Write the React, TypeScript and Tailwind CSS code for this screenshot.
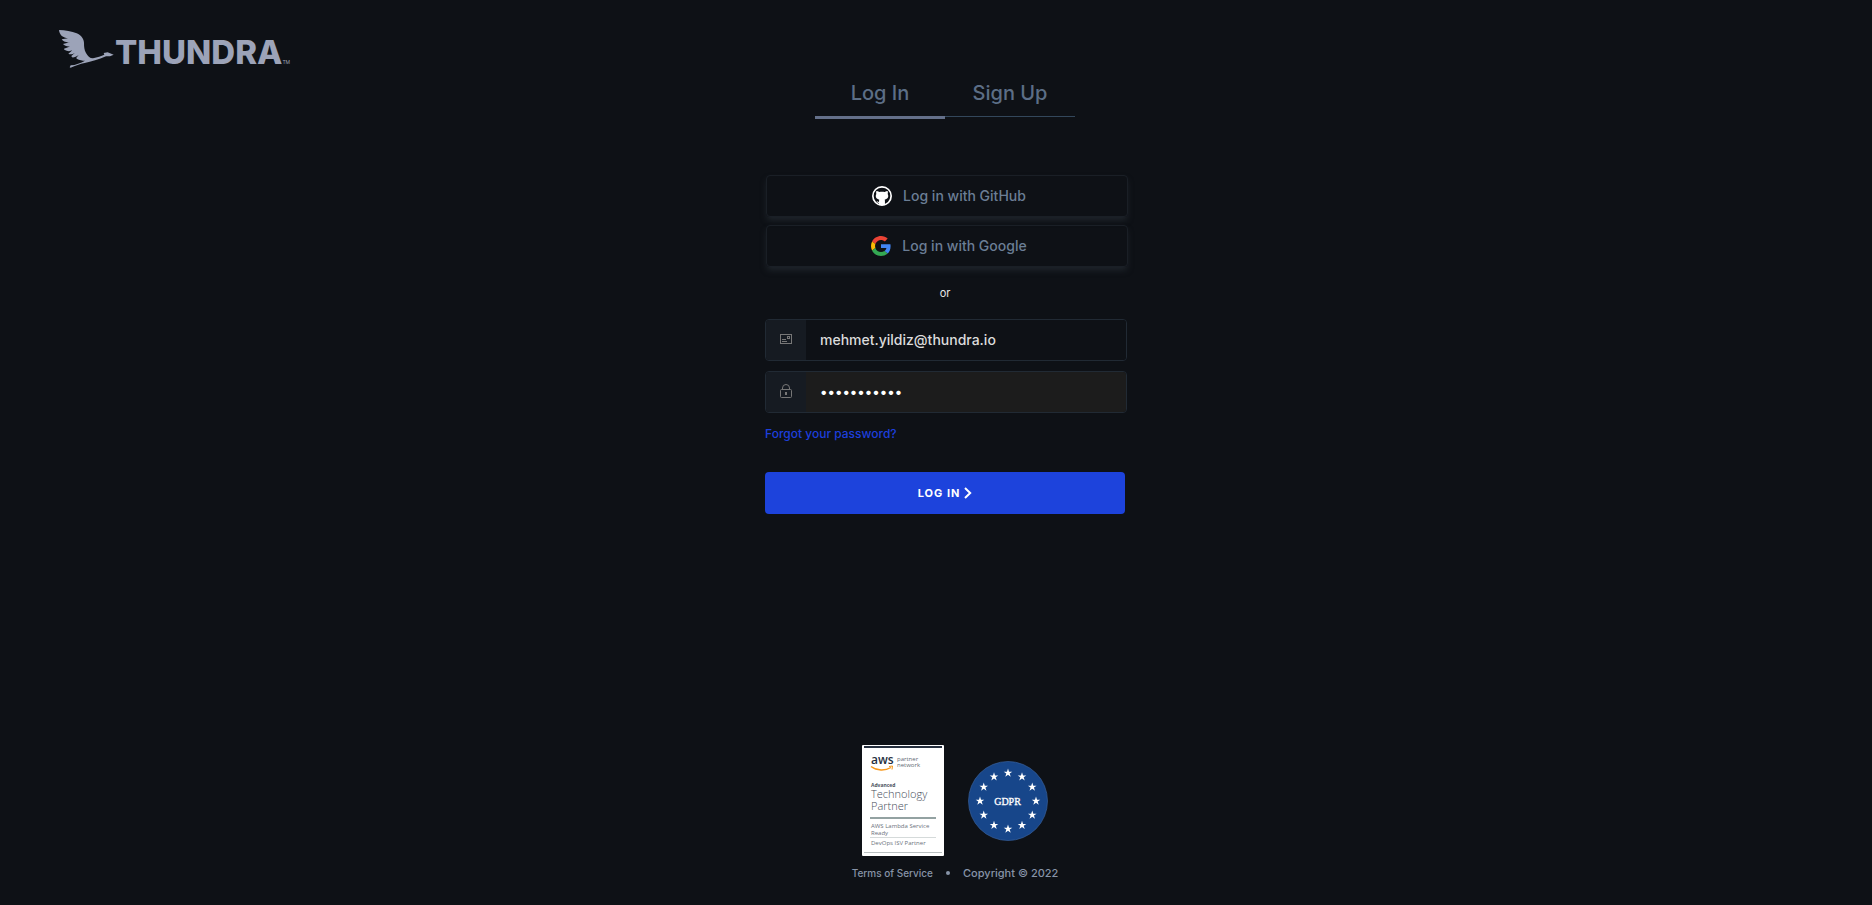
import { useState } from "react";

function Logo() {
  return (
    <a href="#home" aria-label="Thundra" className="flex items-start text-[#9ca3b8]">
      <svg viewBox="27 30 165 114" className="h-[38px] w-[55px]" fill="currentColor" aria-hidden="true">
        <path d="M27 30C45 30 66 34 80 40C94 46 101 56 102 68C102 80 103 90 108 99C113 108 119 115 129 115C142 112 154 108 163 104L161 99L173 97L191 104L180 109L168 109C146 119 124 125 104 129C90 132 76 137 62 143L59 142L62 136C77 135 92 129 105 122C97 122 89 120 80 116L79 113L86 105C79 110 72 113 66 112L64 108L75 98C67 103 61 104 55 101L67 91C59 95 51 94 43 89L42 86L62 79C53 81 44 78 39 72L59 67C48 68 39 65 35 58L54 55C40 54 28 45 27 30Z" />
      </svg>
      <span className="ml-px mt-[7px] text-[33px] leading-[30px] font-extrabold">THUNDRA</span>
      <span className="mt-7 text-[5px] leading-[8px]">TM</span>
    </a>
  );
}

function GitHubIcon() {
  return (
    <svg viewBox="0 0 60 60" className="size-5" aria-hidden="true">
      <circle cx="30" cy="30" r="27.5" fill="none" stroke="#fff" strokeWidth="5" />
      <path fill="#fff" d="M13 15C16 15 19 16 22 18C27 17 33 17 38 18C41 16 44 15 47 15C48 19 48 22 47 24C51 31 48 39 38 41C39 43 39 45 39 58H21V51C16 51 15 47 13 45C17 45 17 48 21 48C21 45 21 43 22 41C12 39 9 31 13 24C12 22 12 19 13 15Z" />
    </svg>
  );
}

function GoogleIcon() {
  return (
    <svg viewBox="0 0 48 48" className="size-5" aria-hidden="true">
      <path fill="#EA4335" d="M24 9.500c3.540 0 6.710 1.220 9.210 3.600l6.850-6.850C35.900 2.380 30.470 0 24 0 14.620 0 6.510 5.380 2.560 13.220l7.980 6.190C12.430 13.720 17.740 9.500 24 9.500z" />
      <path fill="#4285F4" d="M46.980 24.550c0-1.570-.15-3.090-.38-4.550H24v9.020h12.940c-.58 2.960-2.260 5.480-4.780 7.180l7.730 6c4.510-4.180 7.090-10.360 7.090-17.650z" />
      <path fill="#FBBC05" d="M10.530 28.590c-.48-1.450-.76-2.990-.76-4.590s.27-3.140.76-4.590l-7.980-6.190C.92 16.460 0 20.120 0 24c0 3.880.92 7.540 2.560 10.780l7.970-6.190z" />
      <path fill="#34A853" d="M24 48c6.480 0 11.930-2.130 15.890-5.810l-7.730-6c-2.150 1.450-4.920 2.300-8.160 2.300-6.260 0-11.570-4.220-13.470-9.910l-7.980 6.190C6.510 42.620 14.620 48 24 48z" />
    </svg>
  );
}

function CardIcon() {
  return (
    <svg viewBox="0 0 12 10" className="h-[10px] w-3" fill="#777" aria-hidden="true">
      <path fillRule="evenodd" d="M0 0H12V10H0ZM1 1V9H11V1Z" />
      <path fillRule="evenodd" d="M7 2H10V5H7ZM8 3V4H9V3Z" />
      <path d="M2 5H6V6H2ZM2 7H7V8H2Z" />
    </svg>
  );
}

function LockIcon() {
  return (
    <svg viewBox="0 0 12 14" className="h-[14px] w-3" fill="none" stroke="#777" aria-hidden="true">
      <rect x=".5" y="5.5" width="11" height="8" rx="1" />
      <path d="M2.500 5.500V4a3.500 3.500 0 0 1 7 0v1.500" />
      <path d="M6 8v3" strokeWidth="2" />
    </svg>
  );
}

function AwsBadge() {
  return (
    <svg viewBox="0 0 82 111" className="h-[111px] w-[82px]" role="img" aria-label="AWS Advanced Technology Partner" fontFamily="'Open Sans', 'Noto Sans', sans-serif">
      <rect width="82" height="111" rx="1" fill="#fff" />
      <rect x="2" y="1" width="78" height="2" fill="#252f3e" />
      <rect x="2" y="107" width="78" height="1" fill="#b9bfc0" />
      <text x="9" y="19" fontSize="12" fontWeight="600" fill="#252f3e">aws</text>
      <path d="M9 21.500C15 26 23 26 29 22.500" fill="none" stroke="#f7981d" strokeWidth="1.400" />
      <path d="M27 21.500L30.500 21L30 24.500" fill="none" stroke="#f7981d" />
      <g fontSize="6" fill="#626973">
        <text x="35" y="16">partner</text>
        <text x="35" y="22">network</text>
      </g>
      <text x="9" y="42" fontSize="5" fontWeight="700" fill="#4b5260">Advanced</text>
      <g fontSize="11" fontWeight="300" fill="#454c58">
        <text x="9" y="53">Technology</text>
        <text x="9" y="65">Partner</text>
      </g>
      <rect x="8" y="72" width="66" height="2" fill="#93a2a2" />
      <g fontSize="6" fill="#6b727c">
        <text x="9" y="83">AWS Lambda Service</text>
        <text x="9" y="90">Ready</text>
        <text x="9" y="100">DevOps ISV Partner</text>
      </g>
      <rect x="8" y="92" width="66" height="1" fill="#d5dada" />
    </svg>
  );
}

const starAngles = [0, 30, 60, 90, 120, 150, 180, 210, 240, 270, 300, 330];

function GdprBadge() {
  return (
    <svg viewBox="-40 -40 80 80" className="size-20" role="img" aria-label="GDPR">
      <circle r="39.500" fill="#17468a" stroke="#38609b" strokeWidth=".7" />
      {starAngles.map((angle) => {
        const x = 28 * Math.sin((angle * Math.PI) / 180);
        const y = -28 * Math.cos((angle * Math.PI) / 180);
        return (
          <path
            key={angle}
            transform={`translate(${x} ${y})`}
            fill="#fff"
            d="M0-4.500L1.050-1.300H4.300L1.700.600L2.700 3.700L0 1.800L-2.700 3.700L-1.700.600L-4.300-1.300H-1.050Z"
          />
        );
      })}
      <text y="4" x="-0.500" textAnchor="middle" fontSize="10" fill="#fff" stroke="#fff" strokeWidth=".3" fontFamily="'Liberation Serif', serif">GDPR</text>
    </svg>
  );
}

const socialClass =
  "flex h-[42px] w-full items-center justify-center gap-[11px] rounded border border-[#1a1f26] pl-1 text-sm font-medium text-[#6b7e95] shadow-[0_4px_6px_-1px_#20262d]";

export default function App() {
  const [email, setEmail] = useState("mehmet.yildiz@thundra.io");
  const [password, setPassword] = useState("password123");

  return (
    <div className="flex min-h-screen flex-col bg-[#0e1116] font-['Inter',sans-serif]">
      <header className="flex px-[59px] pt-[30px]">
        <Logo />
      </header>

      <main className="flex flex-1 flex-col items-center pl-[18px]">
        <nav className="mt-1 flex w-[260px] items-start text-xl font-medium text-[#5c6e86]">
          <a href="#login" aria-current="page" className="h-[47px] flex-1 border-b-3 border-[#64708a] pt-[7px] text-center leading-7">Log In</a>
          <a href="#signup" className="h-[45px] flex-1 border-b border-[#33475b] pt-[7px] text-center leading-7">Sign Up</a>
        </nav>

        <form className="mt-14 w-[360px]" onSubmit={(e) => e.preventDefault()}>
          <div className="-mr-[3px] ml-px flex flex-col gap-2">
            <button type="button" className={socialClass}>
              <GitHubIcon />
              Log in with GitHub
            </button>
            <button type="button" className={socialClass}>
              <GoogleIcon />
              Log in with Google
            </button>
          </div>

          <p className="my-[17px] text-center text-[11px] leading-[18px] text-[#e6e6e6]">or</p>

          <div className="-mr-[2px] flex flex-col gap-[10px]">
            <div className="flex h-[42px] overflow-hidden rounded border border-[#212a34]">
              <label htmlFor="email" aria-label="Email" className="flex w-10 items-center justify-center bg-[#161b22] pb-0.5">
                <CardIcon />
              </label>
              <input
                id="email"
                type="email"
                value={email}
                onChange={(e) => setEmail(e.target.value)}
                className="min-w-0 flex-1 bg-[#0e1116] px-[14px] text-sm font-medium text-[#dcdcdc] outline-none"
              />
            </div>
            <div className="flex h-[42px] overflow-hidden rounded border border-[#212a34]">
              <label htmlFor="password" aria-label="Password" className="flex w-10 items-center justify-center bg-[#161b22] pb-0.5">
                <LockIcon />
              </label>
              <input
                id="password"
                type="password"
                value={password}
                onChange={(e) => setPassword(e.target.value)}
                className="min-w-0 flex-1 bg-[#1c1c1c] px-[14px] text-sm font-medium text-white outline-none"
              />
            </div>
          </div>

          <a href="#forgot" className="mt-[11px] block w-fit text-xs leading-5 font-medium text-[#1d3fdc]">Forgot your password?</a>

          <button type="submit" className="mt-7 flex h-[42px] w-full items-center justify-center gap-1 rounded bg-[#1d43dc] text-[11px] font-bold tracking-[1px] text-white">
            LOG IN
            <svg viewBox="0 0 8 12" className="h-3 w-2" fill="none" stroke="#fff" strokeWidth="2" aria-hidden="true">
              <path d="M1 1L6.200 6L1 11" />
            </svg>
          </button>
        </form>
      </main>

      <footer className="flex flex-col items-center pb-[23px] pl-[38px]">
        <div className="flex items-center gap-6">
          <AwsBadge />
          <GdprBadge />
        </div>
        <div className="mt-2 flex items-center gap-[13px] leading-[18px] font-medium text-[#8794a8]">
          <a href="#terms" className="text-[10px]">Terms of Service</a>
          <span className="size-1 rounded-full bg-[#8794a8]" />
          <span className="text-[11px]">Copyright © 2022</span>
        </div>
      </footer>
    </div>
  );
}
